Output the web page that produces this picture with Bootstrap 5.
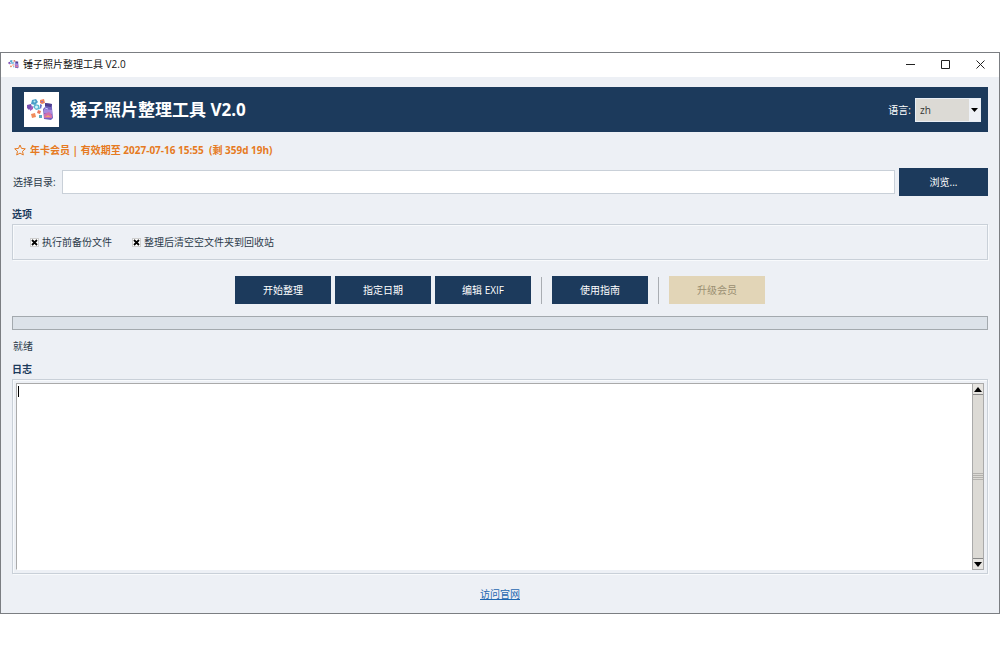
<!DOCTYPE html>
<html lang="zh">
<head>
<meta charset="utf-8">
<meta name="viewport" content="width=device-width, initial-scale=1">
<title>锤子照片整理工具 V2.0</title>
<link href="https://cdn.jsdelivr.net/npm/bootstrap@5.3.0/dist/css/bootstrap.min.css" rel="stylesheet">
<style>
  :root { --navy: #1c3a5c; --panel: #edf0f5; --line: #c9d0d8; }
  body { font: 10px/16px "Open Sans", "Noto Sans CJK SC", sans-serif; color: #2c3a4a; background: #fff; padding: 52px 0; }
  .app-window { background: var(--panel); border: 1px solid #7b7e82; }
  .title-bar { height: 24px; background: #fff; color: #111; padding: 0 13px 2px 7px; }
  .title-bar button { width: 11px; height: 11px; line-height: 0; }
  .app-body { padding: 10px 11px 11px; }
  .banner { background: var(--navy); color: #fff; height: 45px; padding: 0 7px 0 12px; }
  .banner h1 { font-size: 17px; line-height: 24px; font-weight: 700; margin: 0 0 0 11px; }
  .logo-tile { width: 35px; height: 35px; background: #fff; }
  .lang-select { width: 66px; height: 24px; border: 1px solid #e9eef5; background: #dcdad5; color: #333; padding: 0 16px 0 4px; appearance: none; border-radius: 0; }
  .lang-arrow { top: 1px; right: 1px; bottom: 1px; width: 11px; background: #eef1f6; pointer-events: none; }
  .member { color: #e67a22; font-weight: 700; margin-top: 10px; padding-left: 2px; }
  .dir-row { margin-top: 10px; gap: 4px; }
  .dir-row label { padding: 0 2px 0 1px; }
  .dir-input { height: 24px; border: 1px solid var(--line); border-radius: 0; padding: 0 4px; background: #fff; min-width: 0; }
  .btn.tool-btn { --bs-btn-bg: var(--navy); --bs-btn-color: #fff; --bs-btn-hover-bg: #28507c; --bs-btn-hover-color: #fff; --bs-btn-disabled-bg: #e2d5b7; --bs-btn-disabled-color: #9a8f72; --bs-btn-disabled-opacity: 1; --bs-btn-border-width: 0; --bs-btn-border-radius: 0; --bs-btn-font-size: 10px; --bs-btn-line-height: 16px; --bs-btn-padding-x: 0; --bs-btn-padding-y: 0; width: 96px; height: 28px; }
  .btn.browse-btn { width: 89px; }
  .group-title { font-size: 10px; line-height: 16px; font-weight: 700; color: var(--navy); margin: 10px 0 2px; }
  .status-line { margin-top: 8px; padding-left: 1px; }
  .status-line + .group-title { margin-top: 7px; }
  .group-box { border: 1px solid var(--line); box-shadow: inset 1px 1px #f8fafc, 1px 1px #f8fafc; }
  .options { height: 36px; padding: 0 17px; gap: 20px; }
  .tick { appearance: none; width: 9px; height: 9px; margin: 0 3px 0 0; border: 1px solid #cfcfcf; background: #fff; }
  .tick:checked { background: #fff url("data:image/svg+xml,%3Csvg xmlns='http://www.w3.org/2000/svg' viewBox='0 0 7 7'%3E%3Cpath d='M1 1l5 5M6 1L1 6' stroke='%23000' stroke-width='1.8'/%3E%3C/svg%3E") center / 7px no-repeat; }
  .actions { margin-top: 16px; gap: 4px; }
  .divider { width: 1px; height: 27px; background: #a9adb2; margin: 0 6px; }
  .run-progress { height: 14px; margin-top: 12px; background: #dce2e9; border: 1px solid #a3a9ae; border-radius: 0; }
  .log-box { padding: 3px; }
  .log-text { border: 1px solid #aaa; border-right: 0; border-bottom-color: #fff; border-radius: 0; resize: none; padding: 1px 4px; background: #fff; }
  .caret { left: 2px; top: 3px; width: 1px; height: 11px; background: #000; }
  .scroller { width: 12px; background: #dcdad5; border: 1px solid #aaa; }
  .scroller button { height: 11px; border: 0; background: #e7e5e1; padding: 0; line-height: 0; }
  .scroller button:first-child { border-bottom: 1px solid #888; }
  .scroller button:last-child { border-top: 1px solid #888; }
  .grip { height: 8px; background: repeating-linear-gradient(#b4b2ae 0 1px, #dcdad5 1px 2px); }
  .site-link { color: #1f67b1; margin-top: 12px; }
</style>
</head>
<body class="d-flex flex-column min-vh-100">
<svg class="d-none" aria-hidden="true">
  <symbol id="logo" viewBox="0 0 35 35">
    <g stroke-linejoin="round">
      <path d="M8 8l4-1 2 3-3 3-4-1z" fill="#4a9fc8"/><circle cx="10.500" cy="9.500" r="1" fill="#b7edf2"/>
      <path d="M16 8l4-1 1 4-3 1-2-1z" fill="#ee8158"/><path d="M17 9l2 0-1 2z" fill="#8a6ad0"/>
      <path d="M3 13l4-1 1 3-3 3-2-2z" fill="#7a50b2"/><path d="M6 16l3-2 0 3-3 2z" fill="#a05abc"/>
      <path d="M11 12l4 1 1 4-4 1-3-3z" fill="#5ab6d2"/><circle cx="12.500" cy="15" r="1.500" fill="#d8f4fa"/>
      <path d="M16 12l2 1-1 4-1-1z" fill="#6a72c8"/>
      <path d="M7 22l4-1 1 4-4 1z" fill="#f18c5c"/>
      <path d="M14 18l3 1-1 3-3-1z" fill="#e8785e"/>
      <path d="M15 23l3 0 0 3-3 0z" fill="#5ca9c0"/>
      <path d="M21 11l7 1 0 4 1 10-2 2-7-1-1-10 2-2z" fill="#7364bf"/>
      <path d="M21 11l7 1-1 3-6-1z" fill="#4c3e8c"/><path d="M20 17l8 1 0 4-8-1z" fill="#a889de"/>
      <path d="M20 22l5-2 3 3 0 3-8 0z" fill="#d06fae"/><path d="M21 25l3-2 3 2z" fill="#f0a070"/><path d="M21 16l3 1" stroke="#c2c6fc"/>
    </g>
  </symbol>
</svg>
<main class="app-window d-flex flex-column flex-grow-1">
  <header class="title-bar d-flex align-items-center justify-content-between">
    <div class="d-flex align-items-center gap-1"><svg width="11" height="12" viewBox="2 5 28 25" aria-hidden="true"><use href="#logo" width="35" height="35"/></svg><span>锤子照片整理工具 V2.0</span></div>
    <div class="d-flex gap-4">
      <button class="border-0 bg-transparent p-0" aria-label="最小化"><svg width="11" height="11" stroke="#222"><path d="M1 5.500h9"/></svg></button>
      <button class="border-0 bg-transparent p-0" aria-label="最大化"><svg width="11" height="11" stroke="#222" fill="none"><path d="M1.500 1.500h8v8h-8z"/></svg></button>
      <button class="border-0 bg-transparent p-0" aria-label="关闭"><svg width="11" height="11" stroke="#222"><path d="M1.500 1.500l8 8M9.500 1.500l-8 8"/></svg></button>
    </div>
  </header>
  <div class="app-body d-flex flex-column flex-grow-1">
    <section class="banner d-flex align-items-center">
      <div class="logo-tile"><svg class="d-block" width="35" height="35" aria-hidden="true"><use href="#logo"/></svg></div>
      <h1>锤子照片整理工具 V2.0</h1>
      <label class="ms-auto me-1" for="lang">语言:</label>
      <div class="position-relative d-flex">
        <select class="lang-select" id="lang"><option>zh</option><option>en</option></select>
        <span class="lang-arrow position-absolute d-flex align-items-center justify-content-center"><svg width="7" height="4"><path d="M0 0h7L3.500 4z"/></svg></span>
      </div>
    </section>
    <div class="member d-flex align-items-center gap-1"><svg width="12" height="12" viewBox="0 0 12 12" fill="none" stroke="#e67a22" aria-hidden="true"><path d="M6 1l1.500 3.400 3.800.4-2.800 2.500.8 3.700L6 9.100 2.700 11l.8-3.700L.7 4.800l3.800-.4z"/></svg><span>年卡会员 | 有效期至 2027-07-16 15:55&nbsp; (剩 359d 19h)</span></div>
    <div class="dir-row d-flex align-items-center">
      <label for="dir">选择目录:</label>
      <input class="dir-input flex-grow-1" id="dir" type="text">
      <button class="btn tool-btn browse-btn" type="button">浏览...</button>
    </div>
    <h2 class="group-title">选项</h2>
    <section class="group-box options d-flex align-items-center">
      <label class="d-flex align-items-center"><input class="tick" type="checkbox" checked>执行前备份文件</label>
      <label class="d-flex align-items-center"><input class="tick" type="checkbox" checked>整理后清空空文件夹到回收站</label>
    </section>
    <div class="actions d-flex justify-content-center align-items-center">
      <button class="btn tool-btn" type="button">开始整理</button>
      <button class="btn tool-btn" type="button">指定日期</button>
      <button class="btn tool-btn" type="button">编辑 EXIF</button>
      <span class="divider"></span>
      <button class="btn tool-btn" type="button">使用指南</button>
      <span class="divider"></span>
      <button class="btn tool-btn" type="button" disabled>升级会员</button>
    </div>
    <div class="run-progress progress" role="progressbar" aria-label="进度" aria-valuenow="0" aria-valuemin="0" aria-valuemax="100"></div>
    <div class="status-line">就绪</div>
    <h2 class="group-title">日志</h2>
    <section class="group-box log-box d-flex flex-grow-1">
      <div class="position-relative d-flex flex-grow-1"><textarea class="log-text flex-grow-1" aria-label="日志"></textarea><span class="caret position-absolute"></span></div>
      <div class="scroller d-flex flex-column justify-content-between">
        <button type="button" aria-label="向上滚动"><svg width="8" height="5"><path d="M0 5h8L4 0z"/></svg></button>
        <div class="grip"></div>
        <button type="button" aria-label="向下滚动"><svg width="8" height="5"><path d="M0 0h8L4 5z"/></svg></button>
      </div>
    </section>
    <a class="site-link align-self-center" href="#">访问官网</a>
  </div>
</main>
<script src="https://cdn.jsdelivr.net/npm/bootstrap@5.3.0/dist/js/bootstrap.bundle.min.js"></script>
</body>
</html>
